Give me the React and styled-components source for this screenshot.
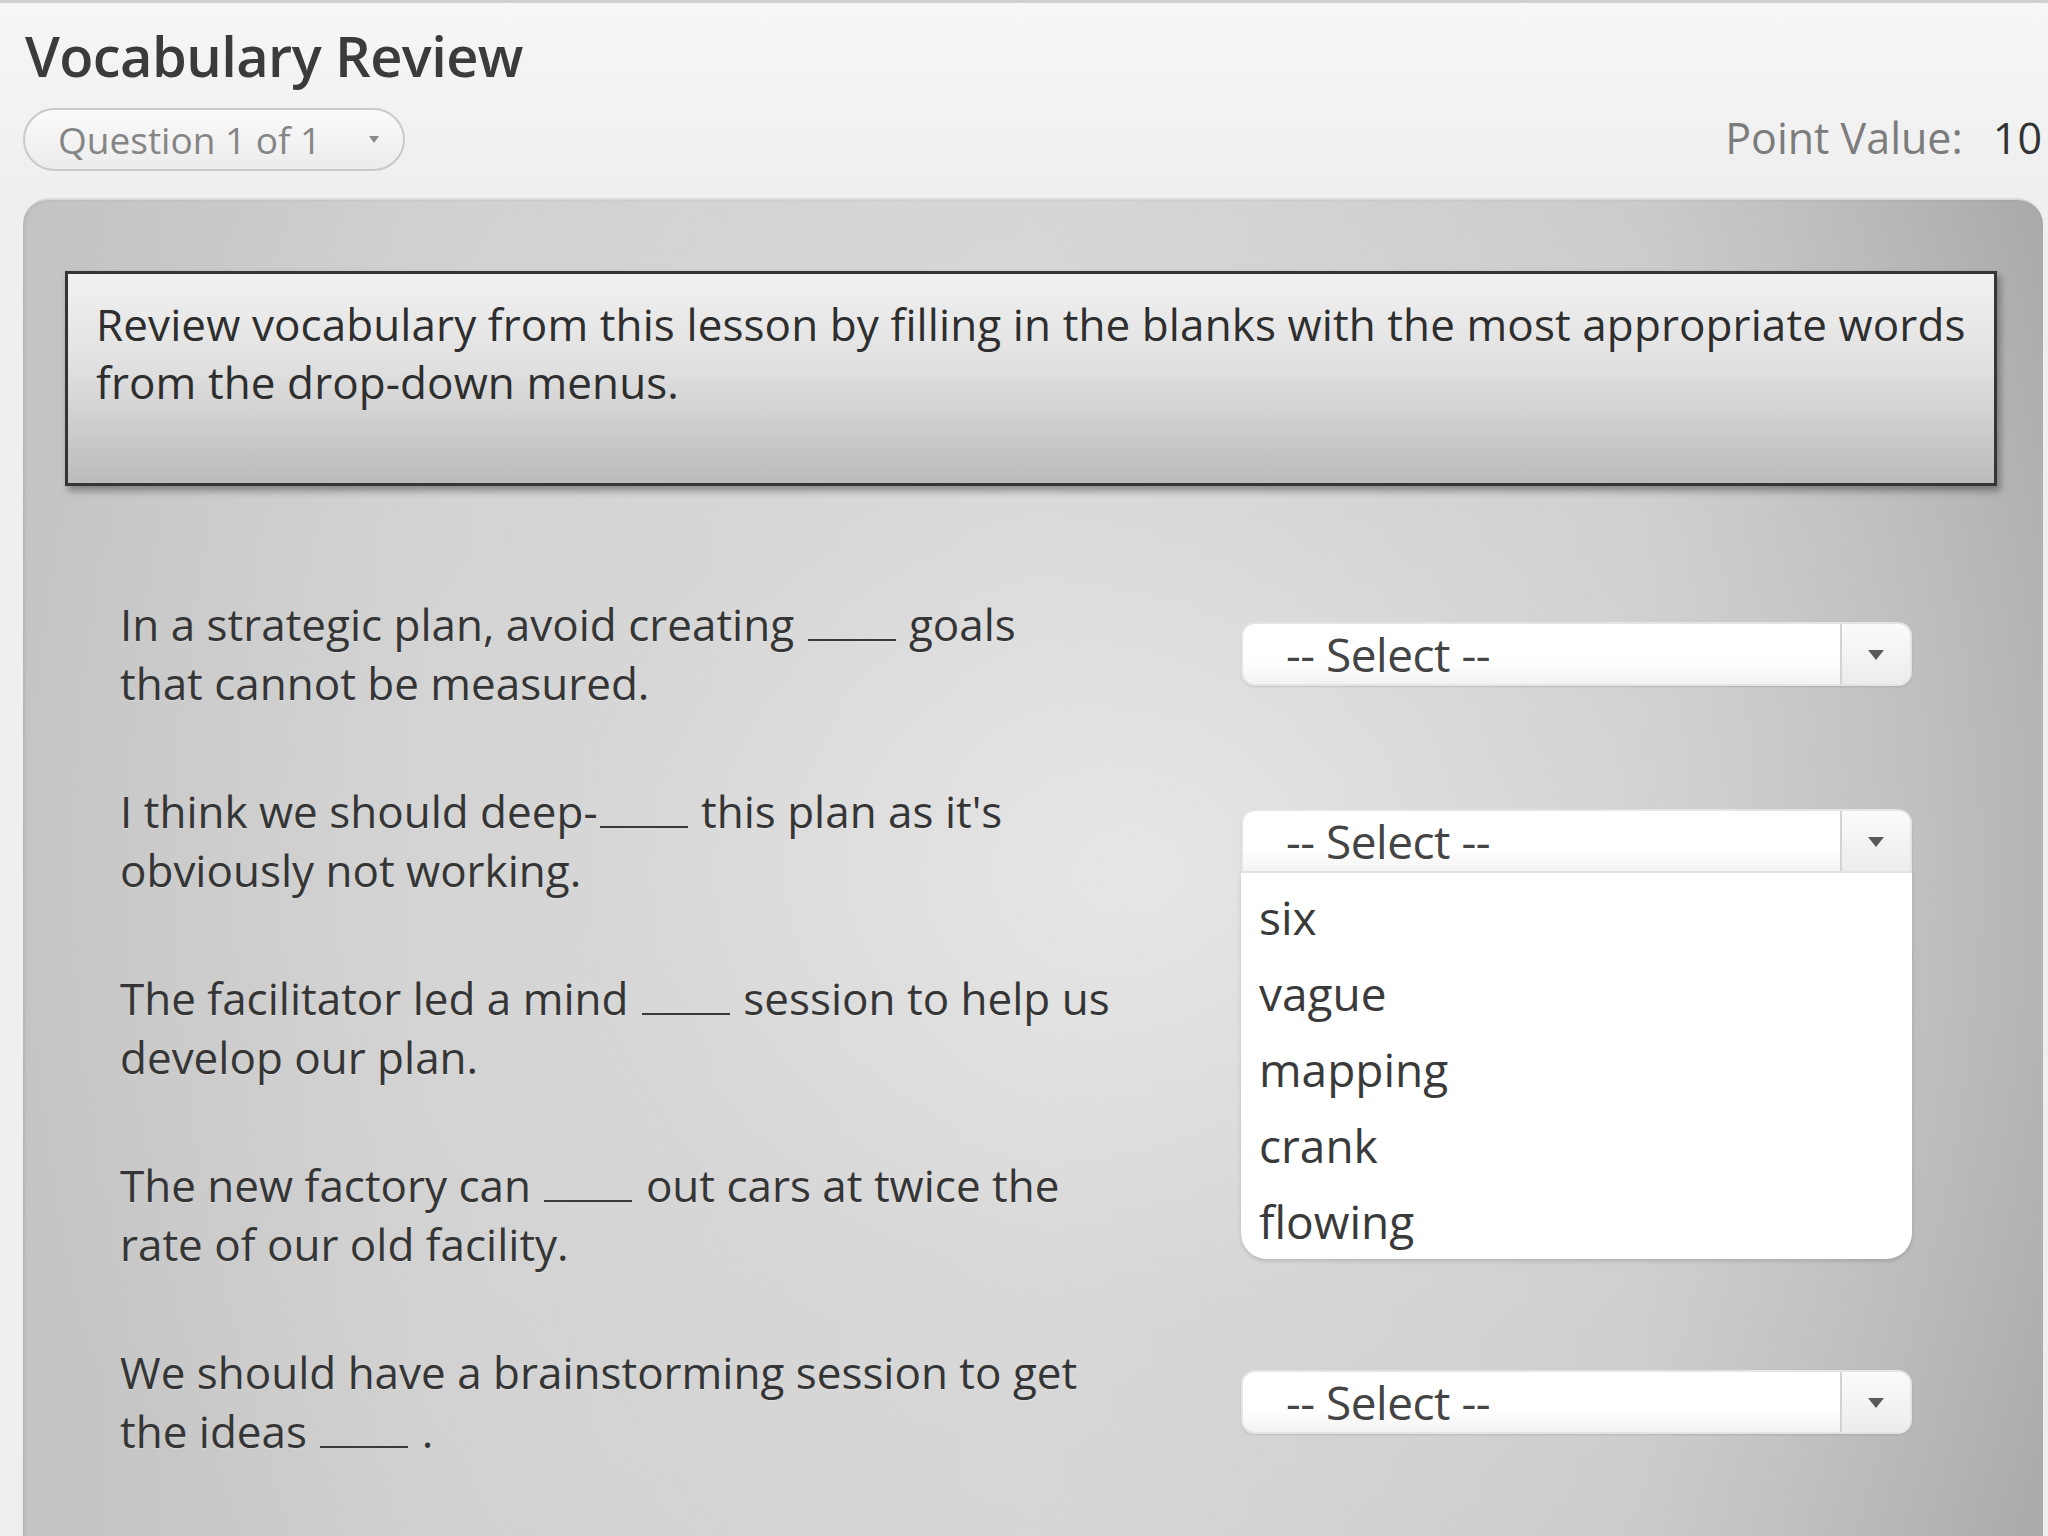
import React from 'react';
import styled, { createGlobalStyle } from 'styled-components';

const GlobalStyle = createGlobalStyle`
  html, body {
    margin: 0;
    padding: 0;
    background: #f0f0f0;
    font-family: "Open Sans", "Noto Sans", sans-serif;
    overflow: hidden;
  }
`;

const Page = styled.div`
  width: 2048px;
  height: 1536px;
  box-sizing: border-box;
  border-top: 3px solid #cfcfcf;
  padding: 0 0 0 23px;
  background: linear-gradient(to bottom, #f6f6f6 0%, #efefef 12%, #eeeeee 100%);
  overflow: hidden;
`;

const Title = styled.h1`
  margin: 17px 0 0 2px;
  font-size: 56px;
  font-weight: 600;
  letter-spacing: -0.6px;
  line-height: 70px;
  color: #3b3b3b;
`;

const HeaderRow = styled.div`
  display: flex;
  align-items: center;
  justify-content: space-between;
  margin-top: 18px;
`;

const QuestionPill = styled.div`
  display: flex;
  align-items: center;
  justify-content: space-between;
  box-sizing: border-box;
  width: 382px;
  height: 63px;
  padding: 0 24px 0 33px;
  border: 2px solid #c9c9c9;
  border-radius: 32px;
  background: linear-gradient(to bottom, #fafafa, #ececec);
  color: #858585;
  font-size: 37px;
`;

const PillArrow = styled.span`
  width: 0;
  height: 0;
  border-left: 5px solid transparent;
  border-right: 5px solid transparent;
  border-top: 7px solid #8a8a8a;
`;

const PointValue = styled.div`
  font-size: 43px;
  color: #7c7c7c;
  margin-top: -4px;
  margin-right: 6px;
  white-space: nowrap;

  b {
    font-weight: 400;
    color: #333;
    margin-left: 30px;
  }
`;

const Panel = styled.div`
  margin-top: 27px;
  width: 2020px;
  height: 1400px;
  box-sizing: border-box;
  padding: 71px 46px 0 42px;
  border-radius: 26px 26px 0 0;
  border-top: 2px solid #d9d9d9;
  background:
    radial-gradient(ellipse 60% 70% at 55% 48%, rgba(232, 232, 232, 0.9) 0%, rgba(220, 220, 220, 0.5) 45%, rgba(200, 200, 200, 0) 100%),
    linear-gradient(to right, #c3c3c3 0%, #cfcfcf 20%, #d4d4d4 50%, #c7c7c7 80%, #a9a9a9 100%);
  box-shadow: inset 2px 0 3px rgba(0, 0, 0, 0.08);
`;

const Instructions = styled.div`
  height: 215px;
  box-sizing: border-box;
  padding: 21px 28px 0;
  border: 3px solid #353535;
  background: linear-gradient(to bottom, #f1f1f1 0%, #e0e0e0 45%, #bbbbbb 100%);
  box-shadow: 3px 5px 7px rgba(0, 0, 0, 0.35);
  font-size: 44px;
  line-height: 58px;
  letter-spacing: 0.1px;
  color: #2e2e2e;
`;

const Questions = styled.div`
  display: flex;
  flex-direction: column;
  margin-top: 74px;
  padding-left: 55px;
`;

const Row = styled.div`
  display: flex;
  align-items: center;
  height: 187px;
`;

const Prompt = styled.div`
  width: 1121px;
  font-size: 44px;
  line-height: 59px;
  color: #353535;
  text-shadow: 0 1px 0 rgba(255, 255, 255, 0.25);
`;

const Blank = styled.span`
  display: inline-block;
  width: 88px;
  height: 4px;
  border-bottom: 2px solid #3a3a3a;
  margin: 0 2px;
`;

const SelectWrap = styled.div`
  position: relative;
  width: 671px;
  visibility: ${(p) => (p.$covered ? 'hidden' : 'visible')};
`;

const SelectBox = styled.div`
  display: flex;
  align-items: stretch;
  box-sizing: border-box;
  height: 64px;
  border: 2px solid #e4e4e4;
  border-radius: ${(p) => (p.$open ? '14px 14px 0 0' : '14px')};
  background: linear-gradient(to bottom, #ffffff 0%, #ffffff 60%, #f3f3f3 100%);
  box-shadow: 0 1px 2px rgba(0, 0, 0, 0.12);
  overflow: hidden;
`;

const SelectLabel = styled.span`
  flex: 1;
  display: flex;
  align-items: center;
  padding-left: 43px;
  font-size: 46px;
  color: #444;
  letter-spacing: -0.5px;
`;

const ArrowCell = styled.span`
  display: flex;
  align-items: center;
  justify-content: center;
  width: 68px;
  border-left: 2px solid #d2d2d2;
  background: linear-gradient(to bottom, #fbfbfb 0%, #ececec 100%);
`;

const Triangle = styled.span`
  width: 0;
  height: 0;
  margin-top: 2px;
  border-left: 8px solid transparent;
  border-right: 8px solid transparent;
  border-top: 10px solid #5a5a5a;
`;

const Menu = styled.ul`
  position: absolute;
  top: 100%;
  left: 0;
  right: 0;
  z-index: 2;
  visibility: visible;
  margin: 0;
  padding: 6px 0 0 18px;
  list-style: none;
  background: #fff;
  border-radius: 0 0 26px 26px;
  box-shadow: 0 2px 4px rgba(0, 0, 0, 0.15);
`;

const Option = styled.li`
  font-size: 46px;
  line-height: 76px;
  color: #3a3a3a;
`;

const Select = ({ open, covered, options }) => (
  <SelectWrap $covered={covered}>
    <SelectBox $open={open}>
      <SelectLabel>-- Select --</SelectLabel>
      <ArrowCell>
        <Triangle />
      </ArrowCell>
    </SelectBox>
    {open && (
      <Menu>
        {options.map((o) => (
          <Option key={o}>{o}</Option>
        ))}
      </Menu>
    )}
  </SelectWrap>
);

// each prompt line: [before blank, after blank]; a single entry means no blank on that line
const questions = [
  [['In a strategic plan, avoid creating ', ' goals'], ['that cannot be measured.']],
  [['I think we should deep-', " this plan as it's"], ['obviously not working.']],
  [['The facilitator led a mind ', ' session to help us'], ['develop our plan.']],
  [['The new factory can ', ' out cars at twice the'], ['rate of our old facility.']],
  [['We should have a brainstorming session to get'], ['the ideas ', ' .']],
];

const Line = ({ parts }) => (
  <>
    {parts[0]}
    {parts.length > 1 && <Blank />}
    {parts[1]}
  </>
);

const words = ['six', 'vague', 'mapping', 'crank', 'flowing'];

export default function App() {
  return (
    <>
      <GlobalStyle />
      <Page>
        <Title>Vocabulary Review</Title>
        <HeaderRow>
          <QuestionPill>
            Question 1 of 1
            <PillArrow />
          </QuestionPill>
          <PointValue>
            Point Value:<b>10</b>
          </PointValue>
        </HeaderRow>
        <Panel>
          <Instructions>
            Review vocabulary from this lesson by filling in the blanks with the most appropriate words
            from the drop-down menus.
          </Instructions>
          <Questions>
            {questions.map(([first, second], i) => (
              <Row key={i}>
                <Prompt>
                  <Line parts={first} />
                  <br />
                  <Line parts={second} />
                </Prompt>
                <Select open={i === 1} covered={i === 2 || i === 3} options={words} />
              </Row>
            ))}
          </Questions>
        </Panel>
      </Page>
    </>
  );
}
